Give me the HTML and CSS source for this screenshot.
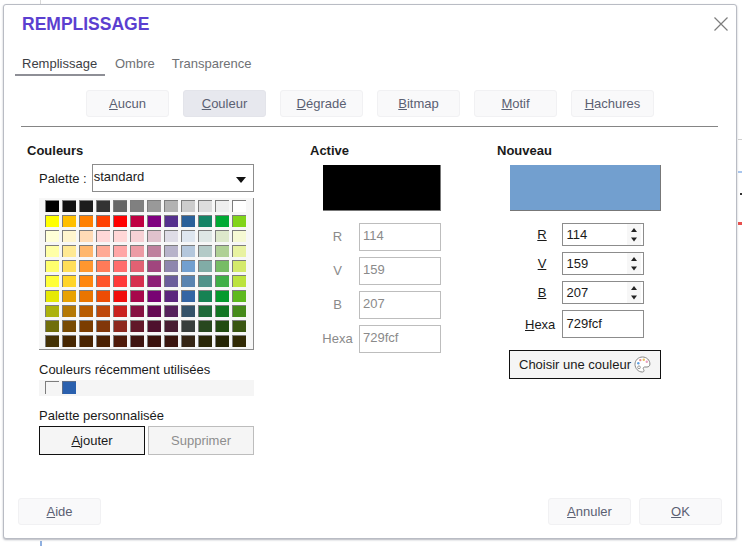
FILE: index.html
```html
<!DOCTYPE html>
<html lang="fr">
<head>
<meta charset="utf-8">
<title>Remplissage</title>
<link rel="stylesheet" href="styles.css">
</head>
<body>
<span class="bit bit-a"></span><span class="bit bit-b"></span><span class="bit bit-c"></span><span class="bit bit-d"></span><span class="bit bit-e"></span><span class="bit bit-f"></span>
<div class="dialog">
  <header class="head">
    <h1 class="title">REMPLISSAGE</h1>
    <svg class="close" width="16" height="16" viewBox="0 0 16 16"><path d="M1.500 1.500L14.500 14.500M14.500 1.500L1.500 14.500" stroke="#7d7d7d" stroke-width="1.200" fill="none"/></svg>
  </header>
  <nav class="tabs">
    <span class="tab tab-on">Remplissage</span>
    <span class="tab">Ombre</span>
    <span class="tab">Transparence</span>
  </nav>
  <div class="modes">
    <span class="btn"><u>A</u>ucun</span>
    <span class="btn btn-on"><u>C</u>ouleur</span>
    <span class="btn"><u>D</u>égradé</span>
    <span class="btn"><u>B</u>itmap</span>
    <span class="btn"><u>M</u>otif</span>
    <span class="btn"><u>H</u>achures</span>
  </div>
  <hr class="rule">
  <main class="cols">
    <section class="col-left">
      <h2 class="sub">Couleurs</h2>
      <div class="indent">
        <div class="palette-row">
          <span>Palette :</span>
          <div class="select">standard<span class="caret"></span></div>
        </div>
        <div class="grid" id="grid">
          <i style="background:#000000"></i><i style="background:#111111"></i><i style="background:#1c1c1c"></i><i style="background:#333333"></i><i style="background:#666666"></i><i style="background:#808080"></i><i style="background:#999999"></i><i style="background:#b2b2b2"></i><i style="background:#cccccc"></i><i style="background:#dddddd"></i><i style="background:#eeeeee"></i><i style="background:#ffffff"></i>
          <i style="background:#ffff00"></i><i style="background:#ffbf00"></i><i style="background:#ff8000"></i><i style="background:#ff4000"></i><i style="background:#ff0000"></i><i style="background:#bf0041"></i><i style="background:#800080"></i><i style="background:#55308d"></i><i style="background:#2a6099"></i><i style="background:#158466"></i><i style="background:#00a933"></i><i style="background:#81d41a"></i>
          <i style="background:#ffffd7"></i><i style="background:#fff5ce"></i><i style="background:#ffdbb6"></i><i style="background:#ffd7d7"></i><i style="background:#ffd7d7"></i><i style="background:#f7d1d5"></i><i style="background:#e0c2cd"></i><i style="background:#dedce6"></i><i style="background:#dee6ef"></i><i style="background:#dee7e5"></i><i style="background:#dde8cb"></i><i style="background:#f6f9d4"></i>
          <i style="background:#ffffa6"></i><i style="background:#ffe994"></i><i style="background:#ffb66c"></i><i style="background:#ffaa95"></i><i style="background:#ffa6a6"></i><i style="background:#ec9ba4"></i><i style="background:#bf819e"></i><i style="background:#b7b3ca"></i><i style="background:#b4c7dc"></i><i style="background:#b3cac7"></i><i style="background:#afd095"></i><i style="background:#e8f2a1"></i>
          <i style="background:#ffff6d"></i><i style="background:#ffde59"></i><i style="background:#ff972f"></i><i style="background:#ff7b59"></i><i style="background:#ff6d6d"></i><i style="background:#e16173"></i><i style="background:#a1467e"></i><i style="background:#8e86ae"></i><i style="background:#729fcf"></i><i style="background:#81aca6"></i><i style="background:#77bc65"></i><i style="background:#d4ea6b"></i>
          <i style="background:#ffff38"></i><i style="background:#ffd428"></i><i style="background:#ff860d"></i><i style="background:#ff5429"></i><i style="background:#ff3838"></i><i style="background:#d62e4e"></i><i style="background:#8d1d75"></i><i style="background:#6b5e9b"></i><i style="background:#5983b0"></i><i style="background:#50938a"></i><i style="background:#3faf46"></i><i style="background:#bbe33d"></i>
          <i style="background:#e6e905"></i><i style="background:#e8a202"></i><i style="background:#ea7500"></i><i style="background:#ed4c05"></i><i style="background:#f10d0c"></i><i style="background:#a7074b"></i><i style="background:#780373"></i><i style="background:#5b277d"></i><i style="background:#3465a4"></i><i style="background:#168253"></i><i style="background:#069a2e"></i><i style="background:#5eb91e"></i>
          <i style="background:#acb20c"></i><i style="background:#b47804"></i><i style="background:#b85c00"></i><i style="background:#be480a"></i><i style="background:#c9211e"></i><i style="background:#861141"></i><i style="background:#650953"></i><i style="background:#55215b"></i><i style="background:#355269"></i><i style="background:#1e6a39"></i><i style="background:#127622"></i><i style="background:#468a1a"></i>
          <i style="background:#706e0c"></i><i style="background:#784b04"></i><i style="background:#7b3d00"></i><i style="background:#813709"></i><i style="background:#8d281e"></i><i style="background:#611729"></i><i style="background:#4e102d"></i><i style="background:#481d32"></i><i style="background:#383d3c"></i><i style="background:#28471f"></i><i style="background:#224b12"></i><i style="background:#395511"></i>
          <i style="background:#443205"></i><i style="background:#472702"></i><i style="background:#492300"></i><i style="background:#4b2102"></i><i style="background:#4f1a09"></i><i style="background:#3e1410"></i><i style="background:#3a120d"></i><i style="background:#3a150e"></i><i style="background:#352515"></i><i style="background:#2a2708"></i><i style="background:#252505"></i><i style="background:#312a05"></i>
        </div>
        <p class="cap cap-recent">Couleurs récemment utilisées</p>
        <div class="recent"><i class="rec-empty"></i><i class="rec-blue"></i></div>
        <p class="cap cap-custom">Palette personnalisée</p>
        <div class="pair">
          <span class="plain plain-focus"><u>A</u>jouter</span>
          <span class="plain plain-off">Supprimer</span>
        </div>
      </div>
    </section>
    <section class="col-mid">
      <h2 class="sub">Active</h2>
      <div class="swatch swatch-active"></div>
      <div class="fields fields-off">
        <label class="field"><span class="lab">R</span><span class="box">114</span></label>
        <label class="field"><span class="lab">V</span><span class="box">159</span></label>
        <label class="field"><span class="lab">B</span><span class="box">207</span></label>
        <label class="field"><span class="lab">Hexa</span><span class="box">729fcf</span></label>
      </div>
    </section>
    <section class="col-right">
      <h2 class="sub">Nouveau</h2>
      <div class="swatch swatch-new"></div>
      <div class="fields-on">
        <label class="fld"><span class="lab-on"><u>R</u></span><span class="ibox">114<span class="spin"><svg width="12" height="21" viewBox="0 0 12 21"><path d="M3 8L6 4L9 8Z M3 13.500L9 13.500L6 17.500Z" fill="#222"/></svg></span></span></label>
        <label class="fld"><span class="lab-on"><u>V</u></span><span class="ibox">159<span class="spin"><svg width="12" height="21" viewBox="0 0 12 21"><path d="M3 8L6 4L9 8Z M3 13.500L9 13.500L6 17.500Z" fill="#222"/></svg></span></span></label>
        <label class="fld"><span class="lab-on"><u>B</u></span><span class="ibox">207<span class="spin"><svg width="12" height="21" viewBox="0 0 12 21"><path d="M3 8L6 4L9 8Z M3 13.500L9 13.500L6 17.500Z" fill="#222"/></svg></span></span></label>
        <label class="fld fld-hex"><span class="lab-on"><u>H</u>exa</span><span class="ibox ibox-hex">729fcf</span></label>
      </div>
      <span class="choose">Choisir une couleur
        <svg class="pal" width="17" height="17" viewBox="0 0 17 17"><path d="M8.500 1C4.300 1 1 4.200 1 8.300S4.300 16 8.300 16c1.100 0 1.700-.6 1.700-1.400 0-1-.8-1.300-.8-2.200 0-.9.700-1.400 1.600-1.400h2.200c1.700 0 2.900-1.200 2.900-2.900C15.900 4 12.600 1 8.500 1Z" fill="#fff" stroke="#858585" stroke-width="1"/><circle cx="4.300" cy="7.200" r="1.200" fill="#5f9fe0"/><circle cx="6.300" cy="4.100" r="1.200" fill="#e88a8a"/><circle cx="9.800" cy="3.700" r="1.200" fill="#e8c060"/><circle cx="12.800" cy="5.800" r="1.200" fill="#e8a0c0"/><circle cx="5" cy="11.300" r="1.400" fill="#fff" stroke="#858585" stroke-width=".8"/></svg>
      </span>
    </section>
  </main>
  <footer class="foot">
    <span class="btn"><u>A</u>ide</span>
    <div class="foot-right">
      <span class="btn"><u>A</u>nnuler</span>
      <span class="btn"><u>O</u>K</span>
    </div>
  </footer>
</div>
</body>
</html>
```

FILE: styles.css
```css
* { box-sizing: border-box; }
html, body { margin: 0; padding: 0; }
body {
  width: 742px;
  height: 546px;
  background: #fff;
  overflow: hidden;
  position: relative;
  font-family: "Liberation Sans", Arial, sans-serif;
  font-size: 13px;
  color: #1a1a1a;
  padding: 4px 0 0 3px;
}
.bit { position: absolute; display: block; }
.bit-a { left: 40px; top: 0; width: 1px; height: 4px; background: #d8d8d8; }
.bit-b { left: 738px; top: 171px; width: 4px; height: 2px; background: #a9c6ee; }
.bit-c { left: 740px; top: 193px; width: 2px; height: 2px; background: #333; }
.bit-d { left: 738px; top: 222px; width: 4px; height: 3px; background: #e8504e; }
.bit-e { left: 738px; top: 139px; width: 4px; height: 1px; background: #d0d0d0; }
.bit-f { left: 40px; top: 541px; width: 2px; height: 5px; background: #8fb0e0; }
.dialog {
  width: 734px;
  height: 535px;
  background: #fff;
  border: 1px solid #b9bcc4;
  border-radius: 3px;
  box-shadow: 0 1px 2px rgba(90, 95, 110, .45);
  display: flex;
  flex-direction: column;
  padding-left: 14px;
  position: relative;
}
.head { height: 39px; padding: 8px 0 0 4px; display: flex; justify-content: space-between; }
.title { margin: 0; font-size: 17.5px; line-height: 22px; font-weight: 700; color: #5b3fd0; }
.close { margin: 3px 7px 0 0; }
.tabs { margin: 11px 0 0 -3px; display: flex; height: 21px; }
.tab { padding: 0 7px 0 5px; line-height: 17px; color: #6f7175; margin-right: 5px; }
.tab-on { color: #3c3e44; width: 90px; border-bottom: 2px solid #8e8f96; margin-right: 0; padding-left: 7px; }
.tab-on + .tab { padding-left: 10px; }
.modes { margin-top: 14px; padding-left: 68px; display: flex; gap: 14px; }
.btn {
  display: block;
  width: 83px;
  height: 27px;
  line-height: 25px;
  text-align: center;
  color: #5b6072;
  background: #f9f9fa;
  border: 1px solid #f1f1f3;
  border-radius: 3px;
}
.btn-on { background: #e7e8ee; border-color: #e3e4ea; }
.rule { margin: 9px 0 0 3px; width: 697px; height: 1px; border: 0; background: #858585; }
.cols { display: flex; padding: 16px 0 0 9px; }
.col-left { width: 283px; }
.col-mid { width: 187px; }
.col-right { width: 190px; }
.sub { margin: 0; font-size: 13px; line-height: 15px; font-weight: 700; color: #1a1a1a; }
.indent { padding-left: 12px; width: 227px; }
.palette-row { margin-top: 6px; display: flex; align-items: center; gap: 5px; height: 28px; }
.select {
  width: 162px;
  height: 28px;
  border: 1px solid #8c8c8c;
  padding: 4px 0 0 1px;
  line-height: 15px;
  position: relative;
}
.caret {
  position: absolute;
  right: 7px;
  top: 12px;
  border: 5px solid transparent;
  border-top: 6px solid #111;
  border-bottom: 0;
}
.grid {
  margin-top: 6px;
  width: 215px;
  height: 152px;
  background: #f7f7f7;
  border-right: 1px solid #8c8c8c;
  border-bottom: 1px solid #8c8c8c;
  display: grid;
  grid-template-columns: repeat(12, 14px);
  grid-auto-rows: 12px;
  column-gap: 3px;
  row-gap: 3px;
  padding: 2px 0 0 6px;
}
.grid i { display: block; border-top: 1px solid #7d7d7d; border-left: 1px solid #7d7d7d; }
.cap { margin: 0; line-height: 15px; }
.cap-recent { margin-top: 12px; }
.recent { margin-top: 3px; height: 16px; width: 215px; background: #f5f5f5; display: flex; gap: 3px; padding: 1px 0 0 6px; }
.recent i { display: block; width: 14px; height: 13px; }
.rec-empty { border-top: 1px solid #7d7d7d; border-left: 1px solid #7d7d7d; background: #f5f5f5; }
.rec-blue { background: #2a60ae; border-top: 1px solid #5d6d88; border-left: 1px solid #5d6d88; }
.cap-custom { margin-top: 12px; }
.pair { margin-top: 3px; display: flex; gap: 3px; width: 215px; }
.plain { display: block; height: 29px; text-align: center; line-height: 27px; background: #f5f5f5; }
.plain-focus { width: 106px; border: 1px solid #111; color: #1a1a1a; }
.plain-off { width: 106px; border: 1px solid #bdbdbd; color: #8d8d8d; }
.swatch { margin-top: 7px; height: 46px; }
.swatch-active { width: 118px; margin-left: 13px; background: #000; border-right: 1px solid #777; border-bottom: 1px solid #777; }
.swatch-new { width: 151px; margin-left: 13px; background: #729fcf; border-right: 1px solid #777; border-bottom: 1px solid #777; }
.fields { margin-top: 12px; display: flex; flex-direction: column; gap: 6px; }
.field { display: flex; align-items: center; height: 28px; color: #8a8a8a; }
.lab { width: 49px; padding: 0 0 2px 6px; text-align: center; margin-right: 0; }
.box { width: 82px; height: 28px; border: 1px solid #bdbdbd; line-height: 24px; padding-left: 3px; }
.fields-on { margin-top: 12px; display: flex; flex-direction: column; gap: 6px; }
.fld { display: flex; align-items: center; height: 23px; }
.fld-hex { height: 28px; }
.lab-on { width: 65px; text-align: right; padding-right: 0; margin-right: 0; }
.fld .lab-on { padding-left: 25px; text-align: center; }
.fld-hex .lab-on { padding-left: 28px; text-align: left; }
.ibox { width: 82px; height: 23px; border: 1px solid #8c8c8c; line-height: 21px; padding-left: 3.500px; display: flex; justify-content: space-between; }
.ibox-hex { height: 28px; line-height: 26px; }
.spin { width: 14px; height: 21px; background: #f7f7f7; margin-right: 2px; display: block; padding-left: 1px; }
.spin svg { display: block; }
.choose {
  margin: 12px 0 0 12px;
  width: 152px;
  height: 29px;
  border: 1px solid #111;
  background: #f5f5f5;
  display: flex;
  align-items: center;
  padding-left: 9px;
  gap: 3px;
  white-space: nowrap;
}
.pal { flex: none; }
.foot { margin-top: auto; height: 27px; margin-bottom: 13px; display: flex; justify-content: space-between; padding-right: 14px; }
.foot-right { display: flex; gap: 8px; }
```
